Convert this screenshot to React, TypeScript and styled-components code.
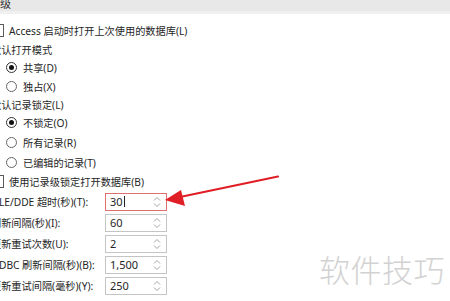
import React from "react";
import styled, { createGlobalStyle } from "styled-components";

const GlobalStyle = createGlobalStyle`
  html, body {
    margin: 0;
    padding: 0;
    background: #ffffff;
  }
  body {
    font-family: "Noto Sans", "Noto Sans CJK SC", sans-serif;
    color: #262626;
  }
`;

const Page = styled.div`
  position: relative;
  width: 450px;
  height: 301px;
  overflow: hidden;
  background: #ffffff;
  font-family: "Noto Sans", "Noto Sans CJK SC", sans-serif;
  font-size: 10.2px;
`;

const Header = styled.div`
  height: 11px;
  background: #e8e8e8;
  border-bottom: 3px solid #f0f0f0;
  display: flex;
  align-items: flex-end;
  margin-left: -11px;
  overflow: hidden;
`;

const HeaderText = styled.span`
  font-size: 11px;
  line-height: 11px;
  transform: translateY(-2px);
  color: #333;
`;

const Panel = styled.div`
  margin-left: -9px;
  padding-top: 6px;
  display: flex;
  flex-direction: column;
`;

const Row = styled.div<{ $h?: number; $indent?: number }>`
  height: ${(p) => p.$h ?? 20}px;
  display: flex;
  align-items: center;
  padding-left: ${(p) => p.$indent ?? 0}px;
  white-space: nowrap;
`;

const Heading = styled(Row)`
  color: #262626;
`;

const CheckBox = styled.span`
  width: 11px;
  height: 11px;
  border: 1px solid #5a5a5a;
  background: #fff;
  margin-right: 5px;
  flex: none;
`;

const Radio = styled.span<{ $on?: boolean }>`
  width: 9px;
  height: 9px;
  border-radius: 50%;
  border: 1px solid ${(p) => (p.$on ? "#333" : "#666")};
  background: #fff;
  margin-right: 6px;
  flex: none;
  display: flex;
  align-items: center;
  justify-content: center;
  &::after {
    content: "";
    display: ${(p) => (p.$on ? "block" : "none")};
    width: 5px;
    height: 5px;
    border-radius: 50%;
    background: #111;
  }
`;

const FieldRow = styled.div`
  height: 21px;
  display: flex;
  align-items: center;
  white-space: nowrap;
`;

const FieldLabel = styled.span`
  width: 114px;
  flex: none;
`;

const SpinBox = styled.div<{ $focus?: boolean }>`
  width: 56px;
  height: 16px;
  border: 1px solid ${(p) => (p.$focus ? "#e07070" : "#c4c4c4")};
  background: #fff;
  display: flex;
  align-items: center;
  padding-left: 4px;
  font-size: 11px;
`;

const SpinValue = styled.span`
  flex: 1;
  display: flex;
  align-items: center;
`;

const Caret = styled.span`
  width: 1px;
  height: 11px;
  background: #222;
  margin-left: 1px;
`;

const Spinner = styled.svg`
  width: 8px;
  height: 12px;
  margin-right: 5px;
`;

const Overlay = styled.svg`
  position: absolute;
  left: 0;
  top: 0;
  pointer-events: none;
`;

const Watermark = styled.div`
  position: absolute;
  left: 319px;
  top: 246px;
  font-size: 31px;
  letter-spacing: 0.5px;
  color: #d2d2d2;
  font-family: "Noto Sans CJK SC", sans-serif;
  font-weight: 300;
  pointer-events: none;
`;

function Spin() {
  return (
    <Spinner viewBox="0 0 8 12">
      <path d="M1 4.5 L4 1.5 L7 4.5" fill="none" stroke="#999" strokeWidth="0.9" />
      <path d="M1 7.5 L4 10.5 L7 7.5" fill="none" stroke="#999" strokeWidth="0.9" />
    </Spinner>
  );
}

const fields = [
  { label: "OLE/DDE 超时(秒)(T):", value: "30", focus: true },
  { label: "刷新间隔(秒)(I):", value: "60" },
  { label: "更新重试次数(U):", value: "2" },
  { label: "ODBC 刷新间隔(秒)(B):", value: "1,500" },
  { label: "更新重试间隔(毫秒)(Y):", value: "250" },
];

export default function App() {
  return (
    <Page>
      <GlobalStyle />
      <Header>
        <HeaderText>高级</HeaderText>
      </Header>
      <Panel>
        <Row>
          <CheckBox />
          Access 启动时打开上次使用的数据库(L)
        </Row>
        <Heading $h={18}>默认打开模式</Heading>
        <Row $indent={15} $h={19}>
          <Radio $on />
          共享(D)
        </Row>
        <Row $indent={15} $h={19}>
          <Radio />
          独占(X)
        </Row>
        <Heading $h={16}>默认记录锁定(L)</Heading>
        <Row $indent={15}>
          <Radio $on />
          不锁定(O)
        </Row>
        <Row $indent={15}>
          <Radio />
          所有记录(R)
        </Row>
        <Row $indent={15}>
          <Radio />
          已编辑的记录(T)
        </Row>
        <Row $h={19}>
          <CheckBox />
          使用记录级锁定打开数据库(B)
        </Row>
        {fields.map((f) => (
          <FieldRow key={f.label}>
            <FieldLabel>{f.label}</FieldLabel>
            <SpinBox $focus={f.focus}>
              <SpinValue>
                {f.value}
                {f.focus && <Caret />}
              </SpinValue>
              <Spin />
            </SpinBox>
          </FieldRow>
        ))}
        <Row>刷新设置</Row>
      </Panel>
      <Watermark>软件技巧</Watermark>
      <Overlay width="450" height="301" viewBox="0 0 450 301">
        <line x1="278" y1="176.5" x2="180" y2="197" stroke="#e01e26" strokeWidth="2.2" strokeLinecap="round" />
        <polygon points="165,200 181,190 185,206" fill="#e01e26" />
      </Overlay>
    </Page>
  );
}
